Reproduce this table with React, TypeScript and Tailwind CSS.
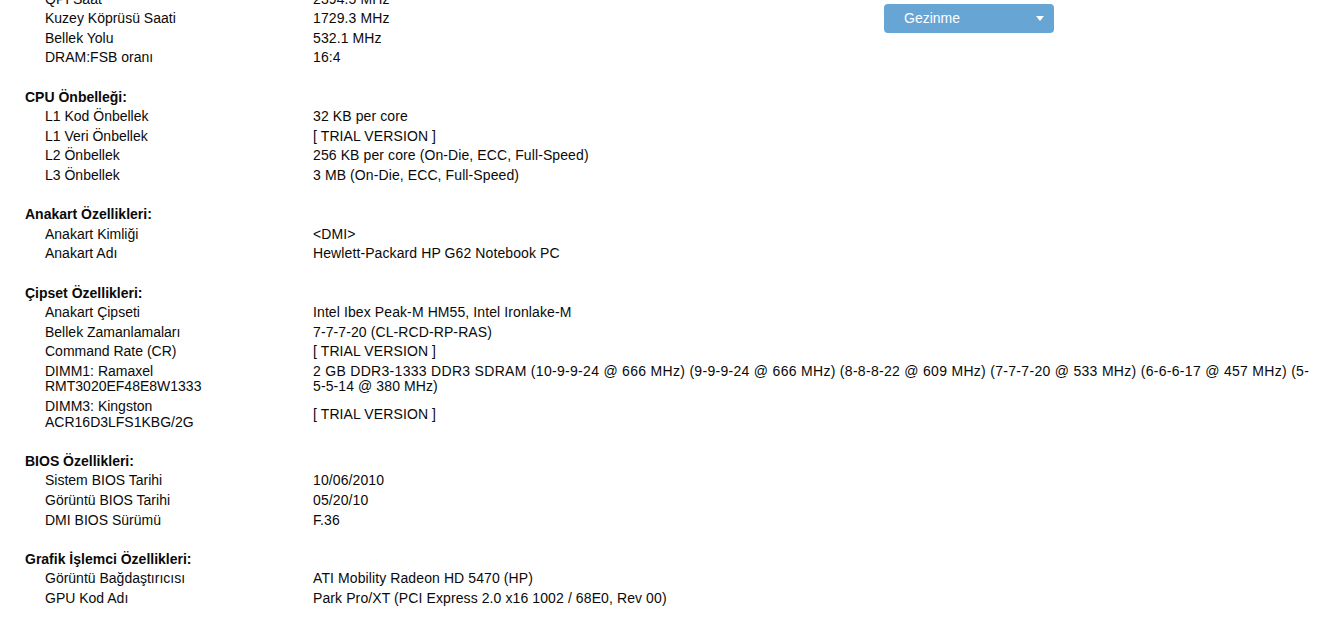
import React from "react";

type Row = { label: string; value: React.ReactNode };
type Section = { title?: string; rows: Row[] };

const sections: Section[] = [
  {
    rows: [
      { label: "QPI Saat", value: "2394.5 MHz" },
      { label: "Kuzey Köprüsü Saati", value: "1729.3 MHz" },
      { label: "Bellek Yolu", value: "532.1 MHz" },
      { label: "DRAM:FSB oranı", value: "16:4" },
    ],
  },
  {
    title: "CPU Önbelleği:",
    rows: [
      { label: "L1 Kod Önbellek", value: "32 KB per core" },
      { label: "L1 Veri Önbellek", value: "[ TRIAL VERSION ]" },
      { label: "L2 Önbellek", value: "256 KB per core (On-Die, ECC, Full-Speed)" },
      { label: "L3 Önbellek", value: "3 MB (On-Die, ECC, Full-Speed)" },
    ],
  },
  {
    title: "Anakart Özellikleri:",
    rows: [
      { label: "Anakart Kimliği", value: "<DMI>" },
      { label: "Anakart Adı", value: "Hewlett-Packard HP G62 Notebook PC" },
    ],
  },
  {
    title: "Çipset Özellikleri:",
    rows: [
      { label: "Anakart Çipseti", value: "Intel Ibex Peak-M HM55, Intel Ironlake-M" },
      { label: "Bellek Zamanlamaları", value: "7-7-7-20 (CL-RCD-RP-RAS)" },
      { label: "Command Rate (CR)", value: "[ TRIAL VERSION ]" },
      {
        label: "DIMM1: Ramaxel RMT3020EF48E8W1333",
        value: (
          <>
            <span className="whitespace-nowrap tracking-[0.3px]">
              2 GB DDR3-1333 DDR3 SDRAM (10-9-9-24 @ 666 MHz) (9-9-9-24 @ 666 MHz) (8-8-8-22 @ 609 MHz) (7-7-7-20 @ 533 MHz) (6-6-6-17 @ 457 MHz) (5-
            </span>
            <br />
            5-5-14 @ 380 MHz)
          </>
        ),
      },
      { label: "DIMM3: Kingston ACR16D3LFS1KBG/2G", value: "[ TRIAL VERSION ]" },
    ],
  },
  {
    title: "BIOS Özellikleri:",
    rows: [
      { label: "Sistem BIOS Tarihi", value: "10/06/2010" },
      { label: "Görüntü BIOS Tarihi", value: "05/20/10" },
      { label: "DMI BIOS Sürümü", value: "F.36" },
    ],
  },
  {
    title: "Grafik İşlemci Özellikleri:",
    rows: [
      { label: "Görüntü Bağdaştırıcısı", value: "ATI Mobility Radeon HD 5470 (HP)" },
      { label: "GPU Kod Adı", value: "Park Pro/XT (PCI Express 2.0 x16 1002 / 68E0, Rev 00)" },
    ],
  },
];

export default function App() {
  return (
    <div className="relative min-h-screen w-[1323px] overflow-hidden bg-white text-[14px] leading-[15.6px] text-[#0a0a0a] font-['Liberation_Sans',Arial,sans-serif]">
      <div className="-mt-[10.4px] w-[1313px]">
        {sections.map((section, i) => (
          <div key={i}>
            {i > 0 && <div className="h-[19.6px]" />}
            {section.title && (
              <div className="py-[2px] pl-[25px] font-bold">{section.title}</div>
            )}
            {section.rows.map((row) => (
              <div key={row.label} className="flex items-center py-[2px]">
                <div className="w-[313px] shrink-0 pl-[45px] pr-[90px]">{row.label}</div>
                <div className="flex-1 tracking-[0.1px]">{row.value}</div>
              </div>
            ))}
          </div>
        ))}
      </div>

      {/* gezinme menüsü */}
      <button className="absolute left-[884px] top-[4px] flex h-[29px] w-[170px] items-center justify-between rounded-[4px] bg-[#67a5d5] pl-[20px] pr-[10px] text-[14px] text-white">
        <span>Gezinme</span>
        <svg width="8" height="5" viewBox="0 0 8 5">
          <path d="M0 0h8L4 5z" fill="white" />
        </svg>
      </button>
    </div>
  );
}
